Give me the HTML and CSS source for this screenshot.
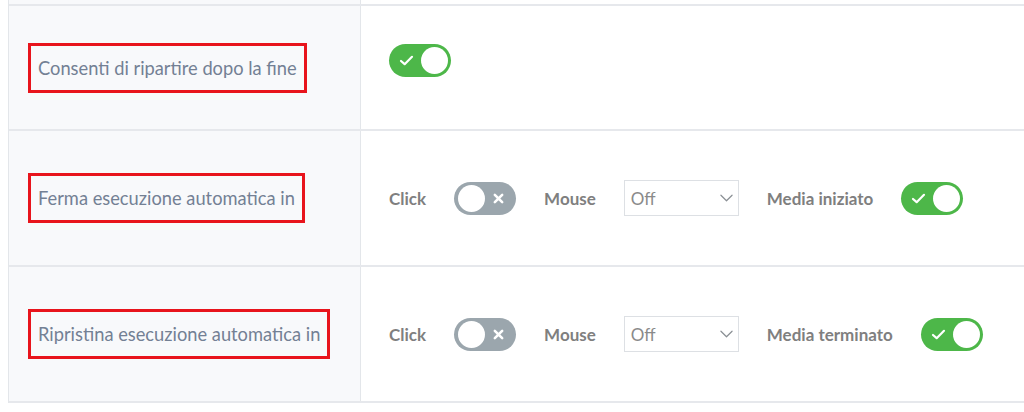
FILE: index.html
```html
<!DOCTYPE html>
<html lang="it">
<head>
    <meta charset="UTF-8">
    <meta name="viewport" content="width=device-width, initial-scale=1.0">
    <title>Impostazioni esecuzione</title>
    <link rel="stylesheet" href="styles.css">
</head>
<body>
    <div class="settings">
        <!-- riga precedente, tagliata in alto -->
        <div class="row row-prev">
            <div class="cell-label"></div>
            <div class="cell-value"></div>
        </div>

        <div class="row row-short">
            <div class="cell-label"><span class="label-box">Consenti di ripartire dopo la fine</span></div>
            <div class="cell-value cell-raised">
                <span class="toggle on">
                    <svg class="mark" viewBox="0 0 16 12" fill="none" stroke="#fff" stroke-width="2.4" stroke-linecap="round" stroke-linejoin="round"><path d="M2 6.5l4 3.5 8-8"/></svg>
                    <span class="knob"></span>
                </span>
            </div>
        </div>

        <div class="row">
            <div class="cell-label"><span class="label-box">Ferma esecuzione automatica in</span></div>
            <div class="cell-value">
                <span class="opt-label">Click</span>
                <span class="toggle off">
                    <span class="knob"></span>
                    <svg class="mark" viewBox="0 0 12 12" fill="none" stroke="#fff" stroke-width="2.8" stroke-linecap="round"><path d="M2 2l8 8M10 2l-8 8"/></svg>
                </span>
                <span class="opt-label">Mouse</span>
                <span class="select">Off <svg class="chevron" viewBox="0 0 14 8" fill="none" stroke="#8a8f94" stroke-width="1.3" stroke-linecap="round" stroke-linejoin="round"><path d="M1 1l6 6 6-6"/></svg></span>
                <span class="opt-label">Media iniziato</span>
                <span class="toggle on">
                    <svg class="mark" viewBox="0 0 16 12" fill="none" stroke="#fff" stroke-width="2.4" stroke-linecap="round" stroke-linejoin="round"><path d="M2 6.5l4 3.5 8-8"/></svg>
                    <span class="knob"></span>
                </span>
            </div>
        </div>

        <div class="row">
            <div class="cell-label"><span class="label-box">Ripristina esecuzione automatica in</span></div>
            <div class="cell-value">
                <span class="opt-label">Click</span>
                <span class="toggle off">
                    <span class="knob"></span>
                    <svg class="mark" viewBox="0 0 12 12" fill="none" stroke="#fff" stroke-width="2.8" stroke-linecap="round"><path d="M2 2l8 8M10 2l-8 8"/></svg>
                </span>
                <span class="opt-label">Mouse</span>
                <span class="select">Off <svg class="chevron" viewBox="0 0 14 8" fill="none" stroke="#8a8f94" stroke-width="1.3" stroke-linecap="round" stroke-linejoin="round"><path d="M1 1l6 6 6-6"/></svg></span>
                <span class="opt-label">Media terminato</span>
                <span class="toggle on">
                    <svg class="mark" viewBox="0 0 16 12" fill="none" stroke="#fff" stroke-width="2.4" stroke-linecap="round" stroke-linejoin="round"><path d="M2 6.5l4 3.5 8-8"/></svg>
                    <span class="knob"></span>
                </span>
            </div>
        </div>
    </div>
</body>
</html>
```

FILE: styles.css
```css
/* Tabella impostazioni */
body {
    margin: 0;
    font-family: Lato, "Liberation Sans", sans-serif;
    background-color: #fff;
    overflow: hidden;
}

.settings {
    margin-left: 8px;
    border-left: 1px solid #e3e6ea;
}

.row {
    display: grid;
    grid-template-columns: 352px 1fr;
    height: 134px;
    border-bottom: 2px solid #e6e8ec;
}

.row-prev {
    height: 4px;
}

.row-short {
    height: 123px;
}

.cell-label {
    display: flex;
    align-items: center;
    padding-left: 19px;
    background-color: #f8f9fb;
    border-right: 1px solid #e3e6ea;
    box-sizing: border-box;
}

.label-box {
    padding: 11px 7px;
    border: 3px solid #e8141c;
    font-size: 18.3px;
    line-height: 22px;
    color: #738094;
}

.cell-value {
    display: flex;
    align-items: center;
    gap: 28px;
    padding-left: 28px;
}

.cell-raised {
    padding-bottom: 14px;
}

.opt-label {
    font-size: 17px;
    font-weight: 700;
    color: #7f7f7f;
}

.toggle {
    display: flex;
    align-items: center;
    justify-content: space-between;
    width: 62px;
    height: 33px;
    border-radius: 17px;
    box-sizing: border-box;
}

.toggle.on {
    padding: 0 3px 0 10px;
    background-color: #4db749;
}

.toggle.off {
    padding: 0 12px 0 4px;
    background-color: #9ba6ad;
}

.toggle .knob {
    width: 27px;
    height: 27px;
    border-radius: 50%;
    background-color: #fff;
}

.toggle.on .mark {
    width: 15px;
    height: 11px;
}

.toggle.off .mark {
    width: 11px;
    height: 11px;
}

.select {
    display: flex;
    align-items: center;
    justify-content: space-between;
    width: 115px;
    height: 36px;
    padding: 0 5px 0 6px;
    border: 1px solid #dde0e4;
    box-sizing: border-box;
    font-size: 17px;
    color: #8a8a8a;
}

.chevron {
    width: 13px;
    height: 8px;
}
```
